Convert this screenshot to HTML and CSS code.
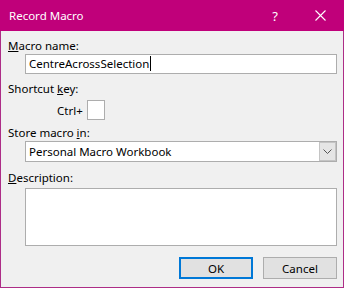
FILE: index.html
```
<!DOCTYPE html>
<html lang="en">
<head>
  <meta charset="utf-8">
  <title>Record Macro</title>
  <link rel="stylesheet" href="styles.css">
</head>
<body>
<div class="dialog">
  <header class="titlebar">
    <span class="title">Record Macro</span>
    <span class="help">?</span>
    <span class="close">
      <svg width="11" height="11" viewBox="0 0 11 11"><path d="M0.5 0.5 L10.5 10.5 M10.5 0.5 L0.5 10.5" stroke="#fff" stroke-width="1.1" fill="none"/></svg>
    </span>
  </header>
  <main class="content">
    <label class="field-label"><u>M</u>acro name:</label>
    <div class="textbox"><span class="caret">CentreAcrossSelection</span></div>

    <label class="field-label">Shortcut <u>k</u>ey:</label>
    <div class="shortcut-row">
      <span>Ctrl+</span>
      <div class="keybox"></div>
    </div>

    <label class="field-label store-label">Store macro <u>i</u>n:</label>
    <div class="combo">
      <span class="combo-value">Personal Macro Workbook</span>
      <span class="combo-button">
        <svg width="9" height="5" viewBox="0 0 9 5"><path d="M0.5 0.5 L4.5 4.5 L8.5 0.5" stroke="#555" stroke-width="1" fill="none"/></svg>
      </span>
    </div>

    <label class="field-label desc-label"><u>D</u>escription:</label>
    <div class="textarea"></div>

    <div class="buttons">
      <button class="btn btn-default">OK</button>
      <button class="btn">Cancel</button>
    </div>
  </main>
</div>
</body>
</html>
```

FILE: styles.css
```
body {
  margin: 0;
  font-family: 'Noto Sans', sans-serif;
  font-size: 11.5px;
  color: #000;
}

.dialog {
  width: 344px;
  height: 288px;
  box-sizing: border-box;
  border: 1px solid #ad2d87;
  border-top: none;
  background-color: #f0f0f0;
  display: flex;
  flex-direction: column;
}

.titlebar {
  height: 31px;
  margin: 0 -1px;
  background-color: #c0007a;
  color: #fff;
  display: flex;
  align-items: center;
  padding-left: 9px;
  font-size: 11.5px;
}

.title {
  flex: 1;
}

.help {
  font-size: 13px;
  margin-right: 37px;
}

.close {
  display: flex;
  margin-right: 18px;
}

.content {
  display: flex;
  flex-direction: column;
  padding: 0 6px 0 7px;
}

.field-label {
  display: block;
  line-height: 16px;
  margin-top: 7px;
}

.store-label {
  margin-top: 5px;
}

.desc-label {
  margin-top: 8px;
}

.textbox {
  margin-left: 17px;
  height: 20px;
  box-sizing: border-box;
  border: 1px solid #adadad;
  background-color: #fff;
  padding-left: 3px;
  line-height: 18px;
}

.caret {
  border-right: 1px solid #000;
  padding-right: 1px;
}

.shortcut-row {
  display: flex;
  align-items: center;
  margin-top: 3px;
  padding-left: 49px;
  gap: 4px;
}

.keybox {
  width: 18px;
  height: 20px;
  box-sizing: border-box;
  border: 1px solid #adadad;
  background-color: #fff;
}

.combo {
  margin-left: 17px;
  height: 21px;
  box-sizing: border-box;
  border: 1px solid #adadad;
  background-color: #fff;
  display: flex;
}

.combo-value {
  flex: 1;
  padding-left: 3px;
  line-height: 19px;
}

.combo-button {
  width: 17px;
  box-sizing: border-box;
  border: 1px solid #c4c4c4;
  background-color: #e5e5e5;
  display: flex;
  align-items: center;
  justify-content: center;
}

.textarea {
  margin-left: 17px;
  margin-top: 2px;
  height: 58px;
  box-sizing: border-box;
  border: 1px solid #adadad;
  background-color: #fff;
}

.buttons {
  display: flex;
  justify-content: flex-end;
  gap: 10px;
  margin-top: 11px;
}

.btn {
  width: 74px;
  height: 22px;
  box-sizing: border-box;
  border: 1px solid #adadad;
  background-color: #e1e1e1;
  font-family: 'Noto Sans', sans-serif;
  font-size: 11.5px;
  color: #000;
  padding: 0;
}

.btn-default {
  border: 2px solid #0078d7;
}
```
